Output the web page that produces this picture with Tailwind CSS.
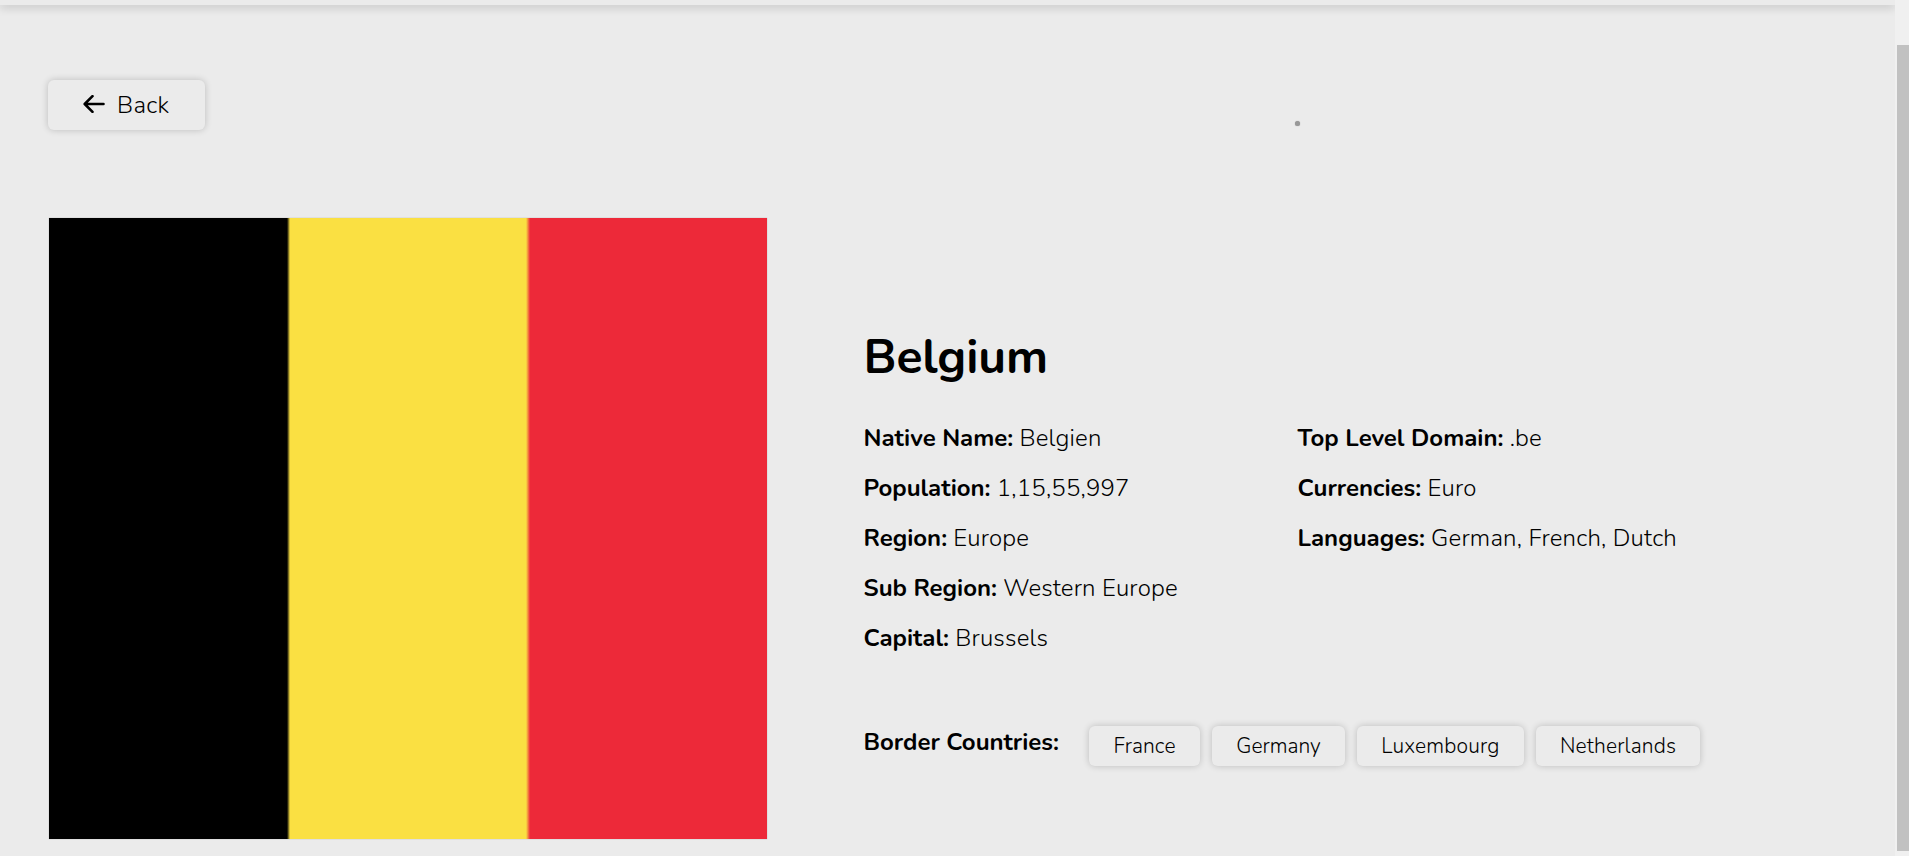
<!DOCTYPE html>
<html lang="en">
<head>
<meta charset="utf-8">
<title>Belgium</title>
<script src="https://cdn.jsdelivr.net/npm/@tailwindcss/browser@4"></script>
</head>
<body class="flex h-screen overflow-hidden bg-[#ebebeb] font-['Nunito','Open_Sans',sans-serif] font-light text-black">
  <div class="flex w-[1895px] flex-col overflow-hidden">
    <header class="h-[5px] w-full shrink-0 bg-[#ebebeb] shadow-[0_2px_10px_rgba(0,0,0,0.22)]"></header>
    <main class="flex flex-col items-start pl-12 pt-[75px]">
      <button class="flex h-[50px] w-[157px] items-center rounded-[6px] bg-[#ebebeb] pl-[35px] shadow-[0_0_7px_rgba(0,0,0,0.2)]">
        <svg class="mt-[-2px] h-[18px] w-[22px]" viewBox="0 0 22 18" fill="none" stroke="#000" stroke-width="2.6" stroke-linecap="round" stroke-linejoin="round"><path d="M9.5 1.2 1.7 9l7.8 7.8M2 9h18.5"/></svg>
        <span class="ml-3 text-[24px] leading-[50px] tracking-[0.28px]">Back</span>
      </button>
      <div class="ml-px mt-[88px] flex">
        <div class="h-[621px] w-[718px] shrink-0 bg-[linear-gradient(to_right,#000_238px,#fae042_241px,#fae042_477px,#ed2939_481px)] shadow-[0_0_1px_rgba(0,0,0,0.3)]"></div>
        <section class="ml-[96.5px] pt-[109px] text-[24px] leading-[50px] tracking-[0.18px] whitespace-nowrap">
          <h1 class="text-[48px] leading-[60px] font-bold tracking-[-0.1px]">Belgium</h1>
          <div class="mt-[26px] flex">
            <ul class="w-[434px]">
              <li><b class="font-bold tracking-normal">Native Name:</b> Belgien</li>
              <li><b class="font-bold tracking-[-0.04px]">Population:</b> 1,15,55,997</li>
              <li><b class="font-bold tracking-normal">Region:</b> Europe</li>
              <li><b class="font-bold tracking-normal">Sub Region:</b> Western Europe</li>
              <li><b class="font-bold tracking-normal">Capital:</b> Brussels</li>
            </ul>
            <ul>
              <li><b class="font-bold tracking-normal">Top Level Domain:</b> .be</li>
              <li><b class="font-bold tracking-normal">Currencies:</b> Euro</li>
              <li><b class="font-bold tracking-normal">Languages:</b> <span class="tracking-[0.2px]">German, French, Dutch</span></li>
            </ul>
          </div>
          <div class="mt-[54px] flex">
            <b class="w-[225.5px] font-bold tracking-normal">Border Countries:</b>
            <div class="mt-[9px] flex h-10 text-[21px] leading-10">
              <button class="w-[111px] rounded-[6px] tracking-[0.12px] shadow-[0_0_7px_rgba(0,0,0,0.2)]">France</button>
              <button class="ml-3 w-[133px] rounded-[6px] tracking-normal shadow-[0_0_7px_rgba(0,0,0,0.2)]">Germany</button>
              <button class="ml-3 w-[167px] rounded-[6px] tracking-[0.19px] shadow-[0_0_7px_rgba(0,0,0,0.2)]">Luxembourg</button>
              <button class="ml-3 w-[164px] rounded-[6px] tracking-[0.16px] shadow-[0_0_7px_rgba(0,0,0,0.2)]">Netherlands</button>
            </div>
          </div>
        </section>
      </div>
    </main>
  </div>
  <div class="flex w-[14px] justify-end bg-[#f0f0f0] pt-[45px]"><div class="h-[806px] w-3 bg-[#c1c1c1]"></div></div>
  <div class="absolute left-[1294.5px] top-[121px] size-[5px] rounded-full bg-[#989898] shadow-[0_0_1px_#999]"></div>
</body>
</html>
